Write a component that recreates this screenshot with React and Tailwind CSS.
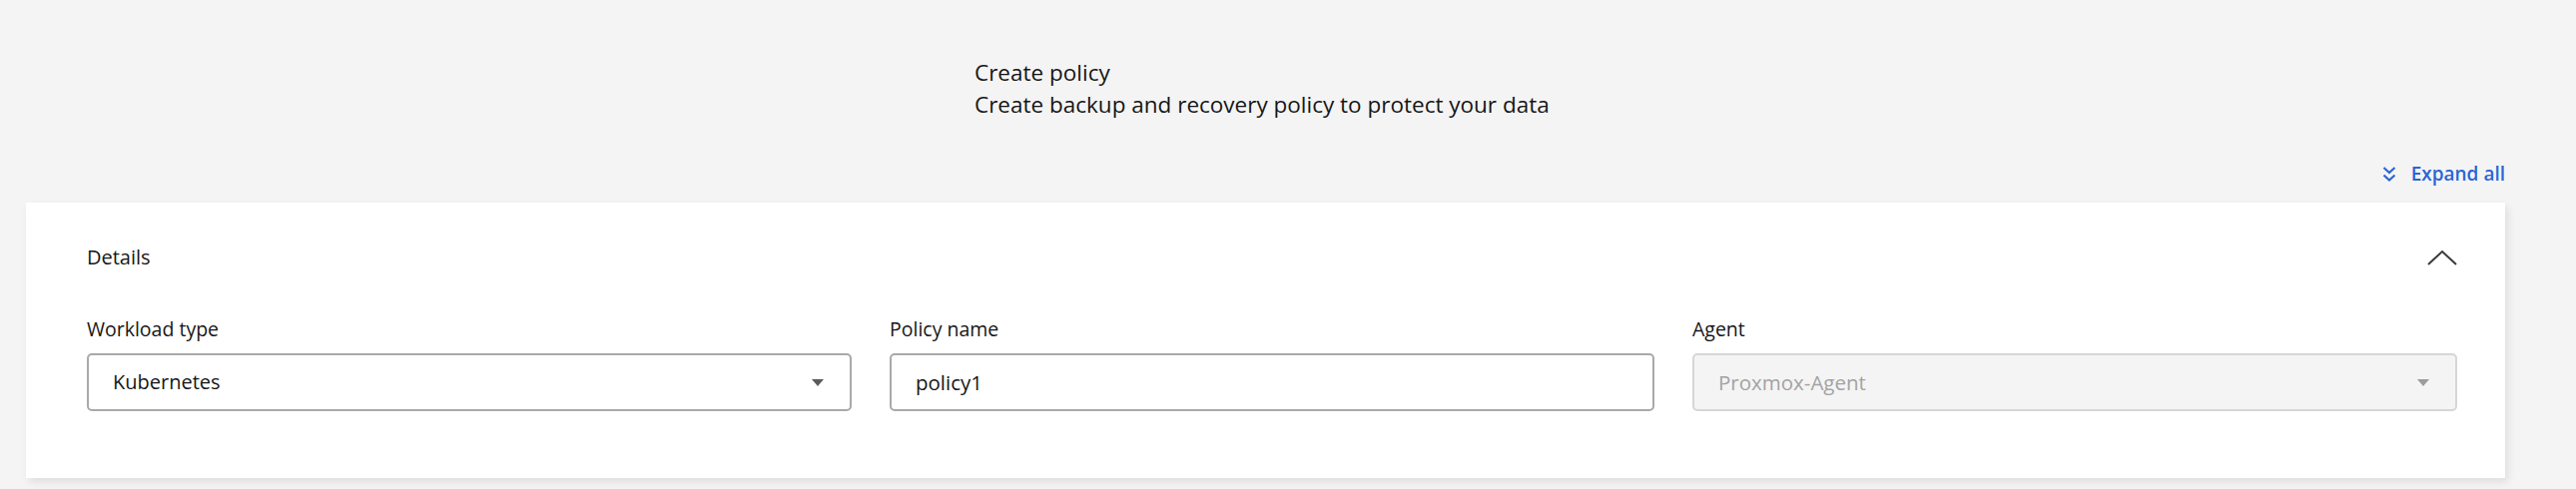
export default function App() {
  return (
    <div
      className="w-[2580px] h-[490px] bg-[#f4f4f4] text-[#161616] overflow-hidden"
      style={{ fontFamily: '"Open Sans", "Noto Sans", sans-serif' }}
    >
      {/* HEADER */}
      <div className="pl-[976px] pt-[57px] text-[22.5px] leading-[32px]">
        <p>Create policy</p>
        <p>Create backup and recovery policy to protect your data</p>
      </div>

      {/* EXPAND ALL */}
      <div className="flex justify-end w-[2509px] mt-[41px]">
        <button className="flex items-center gap-[15px] text-[19px] leading-[24px] font-semibold text-[#2a66d6]">
          <DoubleChevron />
          Expand all
        </button>
      </div>

      {/* DETAILS CARD */}
      <section className="ml-[26px] mt-[17px] w-[2483px] h-[276px] bg-white shadow-[3px_4px_8px_rgba(0,0,0,0.09)] pl-[61px] pr-[48px] pt-[40px]">
        <div className="flex items-center justify-between h-[30px]">
          <h2 className="text-[20px]">Details</h2>
          <ChevronUp />
        </div>

        <div className="grid grid-cols-3 gap-x-[38px] mt-[44px]">
          <Field label="Workload type">
            <SelectBox value="Kubernetes" />
          </Field>
          <Field label="Policy name">
            <div className="h-[58px] rounded-[5px] border-2 border-[#a9a9a9] bg-white flex items-center px-[24px] text-[20.5px]">
              policy1
            </div>
          </Field>
          <Field label="Agent">
            <SelectBox value="Proxmox-Agent" disabled />
          </Field>
        </div>
      </section>
    </div>
  );
}

function Field({ label, children }) {
  return (
    <div>
      <label className="block text-[19.5px] leading-[26px] mb-[11px]">
        {label}
      </label>
      {children}
    </div>
  );
}

function SelectBox({ value, disabled = false }) {
  return (
    <div
      className={
        disabled
          ? "h-[58px] rounded-[5px] border-2 border-[#d6d6d6] bg-[#f4f4f4] flex items-center justify-between pl-[24px] pr-[26px] text-[20.5px] text-[#a3a3a3]"
          : "h-[58px] rounded-[5px] border-2 border-[#a9a9a9] bg-white flex items-center justify-between pl-[24px] pr-[26px] text-[20px]"
      }
    >
      <span>{value}</span>
      <svg width="12" height="7" viewBox="0 0 12 7">
        <path d="M0 0h12L6 7z" fill={disabled ? "#9c9c9c" : "#5c5c5c"} />
      </svg>
    </div>
  );
}

function ChevronUp() {
  return (
    <svg width="30" height="16" viewBox="0 0 30 16" fill="none">
      <path d="M1 15L15 2l14 13" stroke="#3a3a3a" strokeWidth="2" />
    </svg>
  );
}

function DoubleChevron() {
  return (
    <svg width="14" height="17" viewBox="0 0 14 17" fill="none">
      <path
        d="M1.5 2l5.5 5 5.5-5M1.5 9.5l5.5 5 5.5-5"
        stroke="#2a66d6"
        strokeWidth="2.2"
      />
    </svg>
  );
}
